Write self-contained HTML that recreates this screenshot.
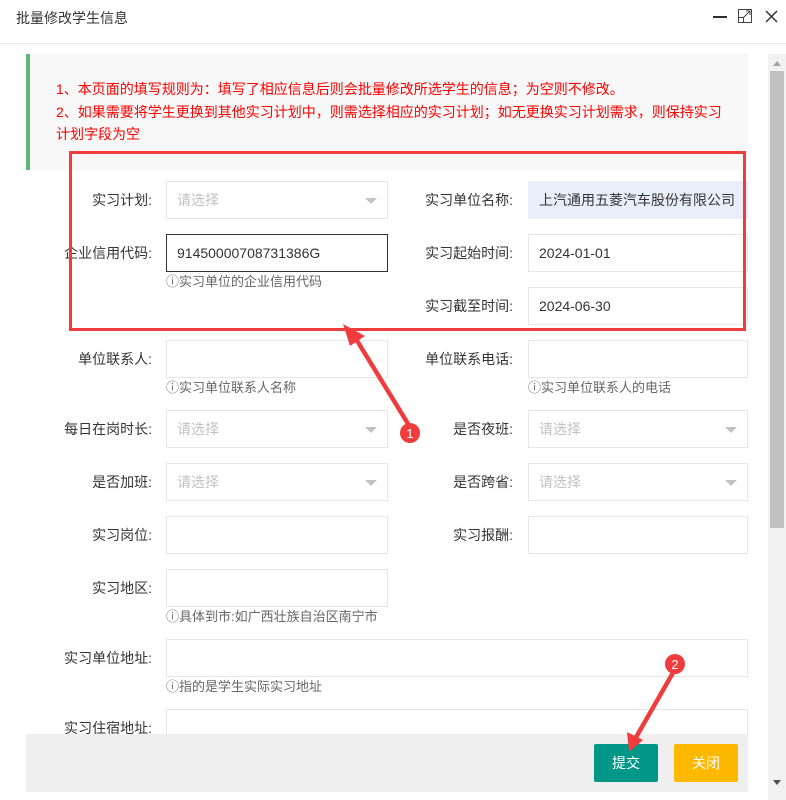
<!DOCTYPE html><html><head><meta charset="utf-8"><style>
*{margin:0;padding:0;box-sizing:border-box}
body{width:786px;height:800px;background:#fff;position:relative;overflow:hidden;font-family:"Liberation Sans","Noto Sans CJK SC",sans-serif;font-size:14px;color:#333}
.a{position:absolute}
.lbl{position:absolute;text-align:right;width:140px;line-height:38px;color:#333}
.in{position:absolute;height:38px;border:1px solid #e6e6e6;background:#fff;padding-left:10px;line-height:36px;color:#333}
.ph{color:#c2c2c2}
.tri{position:absolute;right:10px;top:16px;border:6px solid transparent;border-top:6px solid #c2c2c2;border-bottom:0;width:0;height:0}
.hint{position:absolute;color:#666;font-size:13px;line-height:15px}
</style></head><body>
<div class="a" style="left:16px;top:9px;font-size:14px;color:#333;line-height:18px">批量修改学生信息</div>
<div class="a" style="left:713px;top:16px;width:14px;height:2px;background:#2e2e2e"></div>
<svg class="a" style="left:738px;top:9px" width="15" height="15"><rect x="0.5" y="0.5" width="13" height="13" fill="none" stroke="#444"/><rect x="0.5" y="8.5" width="5" height="5" fill="none" stroke="#444"/><path d="M5 9 L12 2 M8 2 H12 V6" stroke="#444" fill="none"/></svg>
<svg class="a" style="left:765px;top:10px" width="13" height="13"><path d="M1 1 L12 12 M12 1 L1 12" stroke="#333" stroke-width="1.5"/></svg>
<div class="a" style="left:0;top:43px;width:786px;height:1px;background:#e8e8e8"></div>
<div class="a" style="left:26px;top:54px;width:722px;height:116px;background:#f8f8f8;border-left:4px solid #5fb878"></div>
<div class="a" style="left:56px;top:78px;color:#f00;line-height:22.5px;width:690px">1、本页面的填写规则为：填写了相应信息后则会批量修改所选学生的信息；为空则不修改。<br>2、如果需要将学生更换到其他实习计划中，则需选择相应的实习计划；如无更换实习计划需求，则保持实习<br>计划字段为空</div>

<div class="lbl" style="left:12px;top:181px">实习计划:</div>
<div class="in ph" style="left:166px;top:181px;width:222px">请选择<span class="tri"></span></div>
<div class="lbl" style="left:373px;top:181px">实习单位名称:</div>
<div class="in" style="left:528px;top:181px;width:220px;background:#e8effb;border-color:#e8effb;padding-left:10px;white-space:nowrap">上汽通用五菱汽车股份有限公司</div>

<div class="lbl" style="left:12px;top:234px">企业信用代码:</div>
<div class="in" style="left:166px;top:234px;width:222px;border-color:#333">91450000708731386G</div>
<div class="hint" style="left:166px;top:274px">ⓘ实习单位的企业信用代码</div>
<div class="lbl" style="left:373px;top:234px">实习起始时间:</div>
<div class="in" style="left:528px;top:234px;width:220px">2024-01-01</div>
<div class="lbl" style="left:373px;top:287px">实习截至时间:</div>
<div class="in" style="left:528px;top:287px;width:220px">2024-06-30</div>

<div class="lbl" style="left:12px;top:340px">单位联系人:</div>
<div class="in" style="left:166px;top:340px;width:222px"></div>
<div class="hint" style="left:166px;top:380px">ⓘ实习单位联系人名称</div>
<div class="lbl" style="left:373px;top:340px">单位联系电话:</div>
<div class="in" style="left:528px;top:340px;width:220px"></div>
<div class="hint" style="left:528px;top:380px">ⓘ实习单位联系人的电话</div>

<div class="lbl" style="left:12px;top:410px">每日在岗时长:</div>
<div class="in ph" style="left:166px;top:410px;width:222px">请选择<span class="tri"></span></div>
<div class="lbl" style="left:373px;top:410px">是否夜班:</div>
<div class="in ph" style="left:528px;top:410px;width:220px">请选择<span class="tri"></span></div>

<div class="lbl" style="left:12px;top:463px">是否加班:</div>
<div class="in ph" style="left:166px;top:463px;width:222px">请选择<span class="tri"></span></div>
<div class="lbl" style="left:373px;top:463px">是否跨省:</div>
<div class="in ph" style="left:528px;top:463px;width:220px">请选择<span class="tri"></span></div>

<div class="lbl" style="left:12px;top:516px">实习岗位:</div>
<div class="in" style="left:166px;top:516px;width:222px"></div>
<div class="lbl" style="left:373px;top:516px">实习报酬:</div>
<div class="in" style="left:528px;top:516px;width:220px"></div>

<div class="lbl" style="left:12px;top:569px">实习地区:</div>
<div class="in" style="left:166px;top:569px;width:222px"></div>
<div class="hint" style="left:166px;top:609px">ⓘ具体到市:如广西壮族自治区南宁市</div>

<div class="lbl" style="left:12px;top:639px">实习单位地址:</div>
<div class="in" style="left:166px;top:639px;width:582px"></div>
<div class="hint" style="left:166px;top:679px">ⓘ指的是学生实际实习地址</div>

<div class="lbl" style="left:12px;top:709px">实习住宿地址:</div>
<div class="in" style="left:166px;top:709px;width:582px"></div>

<div class="a" style="left:26px;top:734px;width:722px;height:58px;background:#efefef"></div>
<div class="a" style="left:594px;top:744px;width:64px;height:38px;background:#009688;color:#fff;text-align:center;line-height:38px;border-radius:2px">提交</div>
<div class="a" style="left:674px;top:744px;width:64px;height:38px;background:#ffb800;color:#fff;text-align:center;line-height:38px;border-radius:2px">关闭</div>

<div class="a" style="left:768px;top:54px;width:18px;height:746px;background:#f1f1f1"></div>
<div class="a" style="left:770px;top:71px;width:14px;height:457px;background:#c1c1c1"></div>
<div class="a" style="left:773px;top:61px;border:4px solid transparent;border-bottom:5px solid #a3a3a3;border-top:0"></div>
<div class="a" style="left:773px;top:780px;border:4px solid transparent;border-top:5px solid #505050;border-bottom:0"></div>

<svg class="a" style="left:0;top:0" width="786" height="800">
<rect x="70.5" y="152.5" width="674" height="177" fill="none" stroke="#f03c3c" stroke-width="3"/>
<path d="M408 428 L412 426 L358 338 L354 340 Z" fill="#f03c3c"/>
<path d="M343 324 L365 336 L350 346 Z" fill="#f03c3c"/>
<circle cx="410" cy="433" r="10" fill="#f03c3c"/>
<text x="410" y="438" fill="#fff" font-size="13" text-anchor="middle" font-family="Liberation Sans">1</text>
<path d="M672 670 L676 672 L637 740 L633 738 Z" fill="#f03c3c"/>
<path d="M629 752 L627 732 L643 740 Z" fill="#f03c3c"/>
<circle cx="675" cy="664" r="10" fill="#f03c3c"/>
<text x="675" y="669" fill="#fff" font-size="13" text-anchor="middle" font-family="Liberation Sans">2</text>
</svg>
</body></html>
